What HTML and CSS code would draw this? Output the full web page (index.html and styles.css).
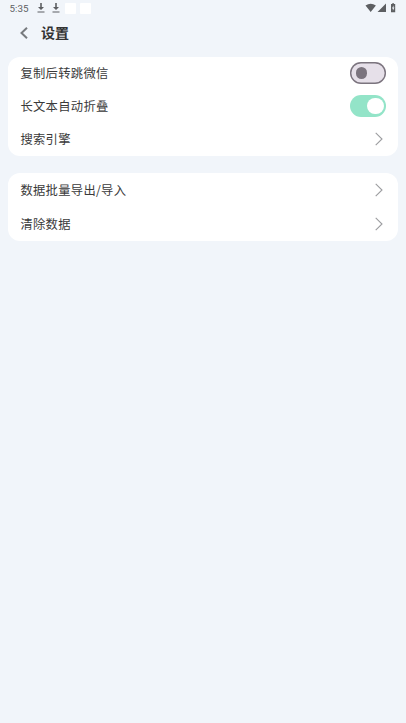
FILE: index.html
```html
<!DOCTYPE html>
<html lang="zh-CN">
<head>
<meta charset="utf-8">
<title>设置</title>
<link rel="stylesheet" href="styles.css">
</head>
<body>
<div class="status">
  <span class="time">5:35</span>
  <svg class="download" viewBox="0 0 8 10"><path d="M3.200 0h1.600v4H7L4 7 1 4h2.200zM.5 8.500h7v1h-7z"/></svg>
  <svg class="download second" viewBox="0 0 8 10"><path d="M3.200 0h1.600v4H7L4 7 1 4h2.200zM.5 8.500h7v1h-7z"/></svg>
  <i class="notice"></i><i class="notice"></i>
  <svg class="signals" viewBox="0 0 32 10">
    <path d="M.5 2.500Q5.700-1.200 10.900 2.500L5.700 9zM21 .5V9h-8.500z"/>
    <path fill-rule="evenodd" d="M26 1h1.200V.2h1.800V1h1.200v8.300H26zM28.500 2.300 27 5.500h.9v2.200l1.500-3.200h-.9z"/>
  </svg>
</div>
<header class="header">
  <svg class="back" viewBox="0 0 8 12"><path d="M7 .8 1.500 6 7 11.200"/></svg>
  <h1>设置</h1>
</header>
<main>
  <section class="card">
    <div class="row"><span>复制后转跳微信</span><i class="switch"></i></div>
    <div class="row middle"><span>长文本自动折叠</span><i class="switch on"></i></div>
    <div class="row"><span>搜索引擎</span><svg class="chevron" viewBox="0 0 8 14"><path d="m.7.8 6.300 6.200-6.300 6.200"/></svg></div>
  </section>
  <section class="card tall">
    <div class="row"><span>数据批量导出/导入</span><svg class="chevron" viewBox="0 0 8 14"><path d="m.7.8 6.300 6.200-6.300 6.200"/></svg></div>
    <div class="row"><span>清除数据</span><svg class="chevron" viewBox="0 0 8 14"><path d="m.7.8 6.300 6.200-6.300 6.200"/></svg></div>
  </section>
</main>
</body>
</html>
```

FILE: styles.css
```css
* { box-sizing: border-box; }
body {
  margin: 0;
  min-height: 100vh;
  background: #f1f5fa;
  color: #333;
  font-family: "Noto Sans CJK SC", sans-serif;
}
svg { display: block; flex: none; }
.status {
  display: flex;
  align-items: center;
  height: 16px;
  padding: 0 9px 0 9.5px;
}
.time {
  width: 27.5px;
  padding-top: 1px;
  font: 9.8px/16px Roboto, sans-serif;
  color: #5d5f62;
}
.download {
  width: 8px;
  height: 10px;
  fill: #5d5f62;
}
.second { margin: 0 5px 0 7px; }
.notice {
  width: 11px;
  height: 11px;
  margin-right: 4px;
  border-radius: 1px;
  background: #fff;
}
.signals {
  width: 32px;
  height: 10px;
  margin-left: auto;
  fill: #5d5f62;
}
.header {
  display: flex;
  align-items: center;
  height: 34px;
  padding-left: 20px;
}
.back {
  width: 8px;
  height: 12px;
  margin-right: 13px;
  fill: none;
  stroke: #777a7e;
  stroke-width: 2;
}
h1 {
  margin: 0;
  padding-bottom: 2px;
  font-size: 14px;
  line-height: 20px;
  font-weight: 700;
}
main { padding: 7px 8px 0; }
.card {
  margin-bottom: 17px;
  padding: 0 12px 1px 12.4px;
  border-radius: 12px;
  background: #fff;
}
.row {
  display: flex;
  align-items: center;
  justify-content: space-between;
  height: 32px;
  color: #3a3a3a;
  font-size: 12.3px;
  line-height: 18px;
  letter-spacing: .3px;
}
.middle { height: 34px; }
.tall { padding-bottom: 0; }
.tall .row { height: 34px; }
.switch {
  display: flex;
  align-items: center;
  width: 36px;
  height: 22px;
  padding-left: 5.5px;
  border-radius: 11px;
  background: #e6e0e9;
  box-shadow: inset 0 0 0 1.4px #7b747e;
}
.switch::before {
  content: "";
  width: 11.5px;
  height: 11.5px;
  border-radius: 50%;
  background: #7b747e;
}
.switch.on {
  justify-content: flex-end;
  padding: 0 2.5px 0 0;
  background: #93e4c8;
  box-shadow: none;
}
.switch.on::before {
  width: 16.5px;
  height: 16.5px;
  background: #fff;
}
.chevron {
  width: 8px;
  height: 14px;
  margin-right: 3px;
  fill: none;
  stroke: #9c9da0;
  stroke-width: 1.1;
}
```
